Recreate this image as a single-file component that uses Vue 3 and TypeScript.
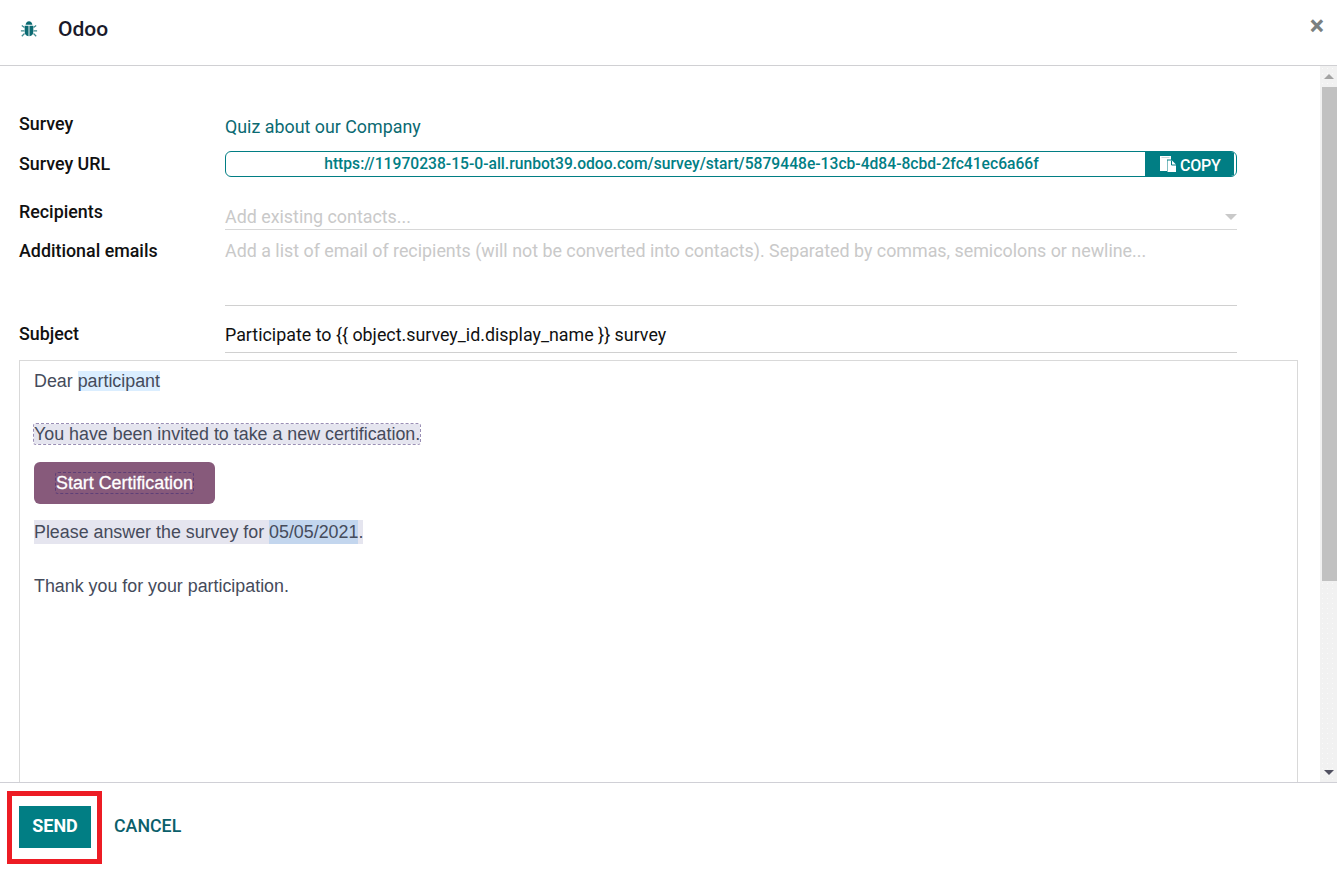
<script setup lang="ts">
const openBrace = "{{";
const closeBrace = "}}";
</script>

<template>
  <div class="dialog">
    <header class="head">
      <svg class="bug" viewBox="0 0 20 20" width="18" height="18">
        <path d="M6.200 5.400C6.400 3 8 1.400 10 1.400s3.600 1.600 3.800 4z" fill="#0b6a72" />
        <path d="M5.200 6.400h4.300V18C7 17.800 5.200 15.800 5.200 13zM10.500 6.400h4.300V13c0 2.800-1.800 4.800-4.300 5z" fill="#0b6a72" />
        <path d="M5 8.400 2 6M5 12H1M5 15l-3 3M15 8.400 18 6M15 12h4M15 15l3 3" stroke="#3d8b90" stroke-width="1.400" fill="none" />
      </svg>
      <h1 class="title">Odoo</h1>
      <span class="close">×</span>
    </header>

    <div class="main">
      <div class="content">
        <div class="form">
          <div class="label l1">Survey</div>
          <div class="value survey-name">Quiz about our Company</div>

          <div class="label l2">Survey URL</div>
          <div class="url-box">
            <span class="url">https://11970238-15-0-all.runbot39.odoo.com/survey/start/5879448e-13cb-4d84-8cbd-2fc41ec6a66f</span>
            <span class="copy">
              <svg viewBox="0 0 16 16" width="16" height="16" class="copy-icon">
                <path d="M0 0h11v3.500H7V15H0z" fill="#fff" />
                <path d="M1.500 1h8v1h-8z" fill="#c9d6d7" />
                <path d="M7.500 4.500h4.500l4 4V16H7.500z" fill="#fff" />
                <path d="M11.500 4.500V9H16" fill="none" stroke="#017e84" stroke-width="1" />
              </svg>
              <span class="copy-text">COPY</span>
            </span>
          </div>

          <div class="label l3">Recipients</div>
          <div class="value recipients">
            <span class="placeholder">Add existing contacts...</span>
            <span class="caret"></span>
          </div>

          <div class="label l4">Additional emails</div>
          <div class="value emails">
            <span class="placeholder">Add a list of email of recipients (will not be converted into contacts). Separated by commas, semicolons or newline...</span>
          </div>

          <div class="label l5">Subject</div>
          <div class="value subject">Participate to {{ openBrace }} object.survey_id.display_name {{ closeBrace }} survey</div>
        </div>

        <div class="editor">
          <p class="p-dear">Dear <span class="hl-blue">participant</span></p>
          <p class="p-invite"><span class="hl-dash">You have been invited to take a new certification.</span></p>
          <div class="cert-btn"><span class="cert-inner">Start Certification</span></div>
          <p class="p-answer"><span class="hl-grey">Please answer the survey for <span class="hl-date">05/05/2021</span>.</span></p>
          <p class="p-thanks">Thank you for your participation.</p>
        </div>
      </div>

      <div class="scrollbar">
        <div class="arrow-up"></div>
        <div class="thumb"></div>
        <div class="arrow-down"></div>
      </div>
    </div>

    <footer class="foot">
      <button class="send">SEND</button>
      <button class="cancel">CANCEL</button>
      <div class="annotation"></div>
    </footer>
  </div>
</template>

<style>
html, body { margin: 0; padding: 0; background: #fff; overflow: hidden; }
</style>

<style scoped>
.dialog {
  width: 1337px;
  height: 877px;
  display: flex;
  flex-direction: column;
  font-family: Roboto, "Liberation Sans", sans-serif;
  color: #212529;
  background: #fff;
}
.head {
  flex: none;
  display: flex;
  align-items: center;
  padding: 0 13px 7px 20px;
  box-sizing: border-box;
  border-bottom: 1px solid #d0d0d3;
  height: 66px;
}
.bug { flex: none; }
.title {
  margin: 0 0 0 20px;
  font-size: 21px;
  font-weight: 500;
  color: #1a1a2a;
  flex: 1;
}
.close {
  font-size: 27px;
  font-weight: 700;
  color: #7a8080;
  line-height: 20px;
  margin-top: -6px;
}
.main {
  flex: 1;
  display: flex;
  min-height: 0;
  overflow: hidden;
  position: relative;
}
.content {
  flex: 1;
  padding: 0 22px 0 19px;
  min-width: 0;
}
.form {
  display: grid;
  grid-template-columns: 206px 1012px;
  align-content: start;
  height: 294px;
}
.label {
  font-size: 17.85px;
  font-weight: 500;
  color: #111;
  line-height: 20px;
}
.value { font-size: 17.85px; line-height: 24px; }
.l1 { margin-top: 48px; }
.survey-name {
  margin-top: 49px;
  color: #0b6a72;
  height: 36px;
}
.l2 { margin-top: 3px; }
.url-box {
  height: 26px;
  box-sizing: border-box;
  border: 1px solid #017e84;
  border-radius: 6px;
  display: flex;
  overflow: hidden;
}
.url {
  flex: 1;
  text-align: center;
  font-size: 15.65px;
  font-weight: 500;
  line-height: 24px;
  color: #017e84;
  padding-right: 8px;
}
.copy {
  width: 91px;
  background: #017e84;
  color: #fff;
  font-size: 16px;
  font-weight: 500;
  display: flex;
  align-items: center;
  padding: 2px 0 0 15px;
  box-sizing: border-box;
  border-right: 2px solid #fff;
  box-shadow: inset -1px 0 0 #017e84;
  white-space: nowrap;
}
.copy-text { letter-spacing: -0.2px; }
.copy-icon { margin: -2px 4px 0 0; flex: none; }
.l3 { margin-top: 25px; }
.recipients {
  margin-top: 26px;
  height: 27px;
  box-sizing: border-box;
  border-bottom: 1px solid #d8d8d8;
  display: flex;
  justify-content: space-between;
  align-items: center;
  line-height: 26px;
}
.placeholder { color: #c9c9c9; font-size: 17.85px; }
.recipients .placeholder { margin-top: 2px; }
.caret {
  width: 0;
  height: 0;
  border-left: 6px solid transparent;
  border-right: 6px solid transparent;
  border-top: 6px solid #c9c9c9;
  margin-top: 2px;
}
.l4 { margin-top: 11px; }
.emails {
  margin-top: 9px;
  height: 67px;
  box-sizing: border-box;
  border-bottom: 1px solid #d0d0d0;
}
.l5 { margin-top: 18px; }
.subject {
  margin-top: 16px;
  height: 31px;
  box-sizing: border-box;
  border-bottom: 1px solid #d0d0d0;
  color: #111;
  line-height: 26px;
}
.editor {
  height: 500px;
  box-sizing: border-box;
  border: 1px solid #d9d9d9;
  padding: 10px 14px;
  font-family: "Liberation Sans", Arial, sans-serif;
  font-size: 17.85px;
  color: #454b5b;
}
.editor p { margin: 0; line-height: 20px; }
.hl-blue { background: #dbeeff; display: inline-block; }
.p-invite { margin-top: 33px !important; }
.hl-dash {
  background: #e5e5ef;
  outline: 1px dashed #9a8fb5;
  border-radius: 2px;
}
.cert-btn {
  width: 181px;
  height: 42px;
  margin-top: 18px;
  background: #875a7b;
  border-radius: 6px;
  display: flex;
  align-items: center;
  justify-content: center;
  color: #fff;
}
.cert-inner {
  outline: 1px dashed #5e3f78;
  line-height: 20px;
  border-radius: 2px;
  -webkit-text-stroke: 0.3px #fff;
}
.p-answer { margin-top: 18px !important; }
.hl-grey { background: #e5e5ef; padding: 2px 0; }
.hl-date { background: #c3d6ee; padding: 2px 0; }
.p-thanks { margin-top: 34px !important; }
.scrollbar {
  width: 17px;
  flex: none;
  background-color: #f1f1f1;
  background-image: radial-gradient(#fafafa 0.6px, transparent 0.8px);
  background-size: 5px 5px;
  position: relative;
  display: flex;
  flex-direction: column;
  align-items: center;
}
.arrow-up {
  margin-top: 8px;
  width: 0;
  height: 0;
  border-left: 5px solid transparent;
  border-right: 5px solid transparent;
  border-bottom: 5px solid #a3a3a3;
}
.thumb {
  margin-top: 8px;
  width: 15px;
  height: 494px;
  background: #c1c1c1;
  margin-left: 2px;
}
.arrow-down {
  margin-top: auto;
  margin-bottom: 7px;
  width: 0;
  height: 0;
  border-left: 5px solid transparent;
  border-right: 5px solid transparent;
  border-top: 5px solid #505060;
}
.foot {
  height: 95px;
  flex: none;
  box-sizing: border-box;
  border-top: 1px solid #d0d0d6;
  display: flex;
  align-items: flex-start;
  padding: 23px 0 0 19px;
  position: relative;
}
.send {
  width: 72px;
  height: 42px;
  background: #017e84;
  color: #fff;
  border: 0;
  padding: 0 0 3px;
  font: 700 18px Roboto, sans-serif;
}
.cancel {
  margin-left: 23px;
  height: 42px;
  background: none;
  border: 0;
  padding: 0 0 3px;
  font: 500 17.8px Roboto, sans-serif;
  color: #0b5f6b;
}
.annotation {
  position: absolute;
  left: 7px;
  top: 8px;
  width: 95px;
  height: 73px;
  box-sizing: border-box;
  border: 5px solid #ed1c24;
}
</style>
